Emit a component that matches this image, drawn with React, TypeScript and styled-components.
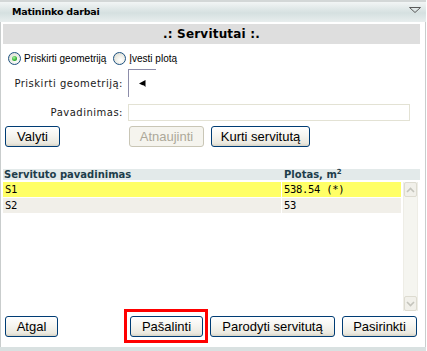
import React from 'react'
import styled, { createGlobalStyle, css } from 'styled-components'

const GlobalStyle = createGlobalStyle`
    html, body {
        margin:0;
        padding:0;
        background:#fff;
    }
    body {
        font-family:"DejaVu Sans", Verdana, sans-serif;
        color:#000;
    }
`

const Panel = styled.div`
    width:426px;
    height:351px;
    display:flex;
    flex-direction:column;
`

const Header = styled.div`
    height:22px;
    box-sizing:border-box;
    border-top:2px solid #d3d7d7;
    background:linear-gradient(to bottom,#f2f5f5 0%,#d5e0e0 55%,#e8eeee 100%);
    display:flex;
    align-items:center;
    justify-content:space-between;
    padding:0 5px 1px 12px;
    .title {
        font-size:9.5px;
        font-weight:bold;
        letter-spacing:-0.2px;
        color:#000;
    }
    svg { display:block; margin-top:-4px; }
`

const Body = styled.div`
    flex:1;
    display:flex;
    flex-direction:column;
    border-left:1px solid #c9cdcd;
    border-right:1px solid #c9cdcd;
    padding:2px 5px 0 2px;
`

const TitleBar = styled.div`
    height:20px;
    line-height:20px;
    background:#dedede;
    text-align:center;
    font-size:12px;
    font-weight:bold;
    letter-spacing:0.2px;
`

const RadioRow = styled.div`
    margin-top:8px;
    height:13px;
    display:flex;
    align-items:center;
    padding-left:5px;
`

const Radio = styled.span<{ $checked?: boolean }>`
    width:13px;
    height:13px;
    box-sizing:border-box;
    border-radius:50%;
    border:1px solid #1c5180;
    background:radial-gradient(circle at 60% 65%,#ffffff 0%,#f0f0ea 40%,#d6d6cc 100%);
    display:flex;
    align-items:center;
    justify-content:center;
    ${p => p.$checked && css`
        &::after {
            content:'';
            width:5px;
            height:5px;
            border-radius:50%;
            background:radial-gradient(circle at 40% 35%,#a8f0a0 0%,#30b030 60%,#1d8a1d 100%);
        }
    `}
`

const RadioLabel = styled.span`
    font-family:"Liberation Sans", Arial, sans-serif;
    font-size:10px;
    margin:0 7px 0 3px;
`

const FormRow = styled.div<{ $gap: number }>`
    display:grid;
    grid-template-columns:123px 1fr;
    column-gap:2px;
    margin-top:${p => p.$gap}px;
    align-items:center;
`

const Label = styled.span`
    text-align:right;
    padding-right:3px;
    font-size:10px;
    letter-spacing:0.5px;
    color:#1a1a1a;
`

const GeomBox = styled.div`
    width:28px;
    height:28px;
    box-sizing:border-box;
    border-top:1px solid #8d8daa;
    border-left:1px solid #8d8daa;
    padding:10px 0 0 10px;
    svg { display:block; }
`

const TextInput = styled.input`
    width:282px;
    height:17px;
    box-sizing:border-box;
    border:1px solid #e3e2d4;
    padding:0 2px;
    outline:none;
`

const Buttons = styled.div<{ $pl?: number }>`
    display:flex;
    gap:7px;
    align-items:center;
    padding-left:${p => p.$pl ?? 0}px;
`

const XpButton = styled.button<{ $w: number }>`
    width:${p => p.$w}px;
    height:21px;
    box-sizing:border-box;
    padding:0;
    border:1px solid #003c74;
    border-radius:3px;
    background:linear-gradient(to bottom,#ffffff 0%,#f6f5f0 45%,#ebe9e0 85%,#d8d4c6 100%);
    font-family:"Liberation Sans", Arial, sans-serif;
    font-size:13px;
    color:#000;
    &:disabled {
        color:#aca899;
        border-color:#c9c6b6;
        background:#f5f4ee;
    }
`

const Highlight = styled.span`
    position:relative;
    display:flex;
    &::after {
        content:'';
        position:absolute;
        top:-7px;
        bottom:-6px;
        left:-6px;
        right:-5px;
        border:3px solid #f00;
        pointer-events:none;
    }
`

const TableHead = styled.div`
    margin-top:22px;
    height:11px;
    display:grid;
    grid-template-columns:281px 1fr;
    background:#e3eaea;
    font-size:10px;
    font-weight:bold;
    line-height:11px;
    color:#1d3d4b;
    span:first-child { padding-left:1px; }
    sup { font-size:7px; vertical-align:4px; line-height:0; }
`

const ListArea = styled.div`
    margin-top:2px;
    height:129px;
    display:flex;
    gap:2px;
`

const Rows = styled.div`
    width:398px;
    display:flex;
    flex-direction:column;
    gap:1px;
`

const Row = styled.div<{ $selected?: boolean }>`
    height:15px;
    display:grid;
    grid-template-columns:278px 1fr;
    column-gap:1px;
    span {
        padding-left:2px;
        line-height:15px;
        font-family:"DejaVu Sans Mono", "Liberation Mono", monospace;
        font-size:10.5px;
        letter-spacing:-0.3px;
        background:${p => p.$selected ? '#ffff66' : '#f1efe9'};
    }
`

const Scrollbar = styled.div`
    width:15px;
    box-sizing:border-box;
    background:#f5f5f0;
    border-left:1px solid #eeede6;
    border-right:1px solid #eeede6;
    display:flex;
    flex-direction:column;
    justify-content:space-between;
`

const ScrollButton = styled.div`
    height:15px;
    box-sizing:border-box;
    border:1px solid #dddbd0;
    border-radius:2px;
    background:#f1f0ea;
    display:flex;
    align-items:center;
    justify-content:center;
    svg { display:block; }
`

const BottomRow = styled.div`
    margin-top:5px;
    display:flex;
    justify-content:space-between;
    align-items:center;
    padding:0 3px 0 2px;
`

const Band = styled.div`
    height:4px;
    background:#d9e1e1;
`

const Chevron: React.FC<{ up?: boolean }> = ({ up }) => (
    <svg width="9" height="6" viewBox="0 0 9 6">
        <path d={up ? 'M1 5 L4.5 1.5 L8 5' : 'M1 1 L4.5 4.5 L8 1'} fill="none" stroke="#c4c4bc" strokeWidth="1.6" />
    </svg>
)

const rows = [
    { name: 'S1', area: '538.54 (*)', selected: true },
    { name: 'S2', area: '53', selected: false },
]

const App: React.FC = () => {
    return (
        <>
            <GlobalStyle />
            <Panel>
                <Header>
                    <span className='title'>Matininko darbai</span>
                    <svg width="12" height="6" viewBox="0 0 12 6">
                        <path d="M0.5 0.5 L11.5 0.5 L6 5.5 Z" fill="none" stroke="#5a5a5a" strokeWidth="1" />
                    </svg>
                </Header>
                <Body>
                    <TitleBar>.: Servitutai :.</TitleBar>
                    <RadioRow>
                        <Radio $checked />
                        <RadioLabel>Priskirti geometriją</RadioLabel>
                        <Radio />
                        <RadioLabel>Įvesti plotą</RadioLabel>
                    </RadioRow>
                    <FormRow $gap={4}>
                        <Label>Priskirti geometriją:</Label>
                        <GeomBox>
                            <svg width="7" height="8" viewBox="0 0 7 8">
                                <path d="M0 3.5 L6.5 0 L6.5 7 L5 5.5 L3 5 Z" fill="#000" />
                            </svg>
                        </GeomBox>
                    </FormRow>
                    <FormRow $gap={7}>
                        <Label>Pavadinimas:</Label>
                        <TextInput defaultValue="" />
                    </FormRow>
                    <FormRow $gap={5}>
                        <Buttons $pl={2}>
                            <XpButton $w={55}>Valyti</XpButton>
                        </Buttons>
                        <Buttons $pl={1}>
                            <XpButton $w={75} disabled>Atnaujinti</XpButton>
                            <XpButton $w={99}>Kurti servitutą</XpButton>
                        </Buttons>
                    </FormRow>
                    <TableHead>
                        <span>Servituto pavadinimas</span>
                        <span>Plotas, m<sup>2</sup></span>
                    </TableHead>
                    <ListArea>
                        <Rows>
                            {rows.map(r => (
                                <Row key={r.name} $selected={r.selected}>
                                    <span>{r.name}</span>
                                    <span>{r.area}</span>
                                </Row>
                            ))}
                        </Rows>
                        <Scrollbar>
                            <ScrollButton><Chevron up /></ScrollButton>
                            <ScrollButton><Chevron /></ScrollButton>
                        </Scrollbar>
                    </ListArea>
                    <BottomRow>
                        <XpButton $w={53}>Atgal</XpButton>
                        <Buttons>
                            <Highlight>
                                <XpButton $w={73}>Pašalinti</XpButton>
                            </Highlight>
                            <XpButton $w={125}>Parodyti servitutą</XpButton>
                            <XpButton $w={75}>Pasirinkti</XpButton>
                        </Buttons>
                    </BottomRow>
                </Body>
                <Band />
            </Panel>
        </>
    )
}

export default App
